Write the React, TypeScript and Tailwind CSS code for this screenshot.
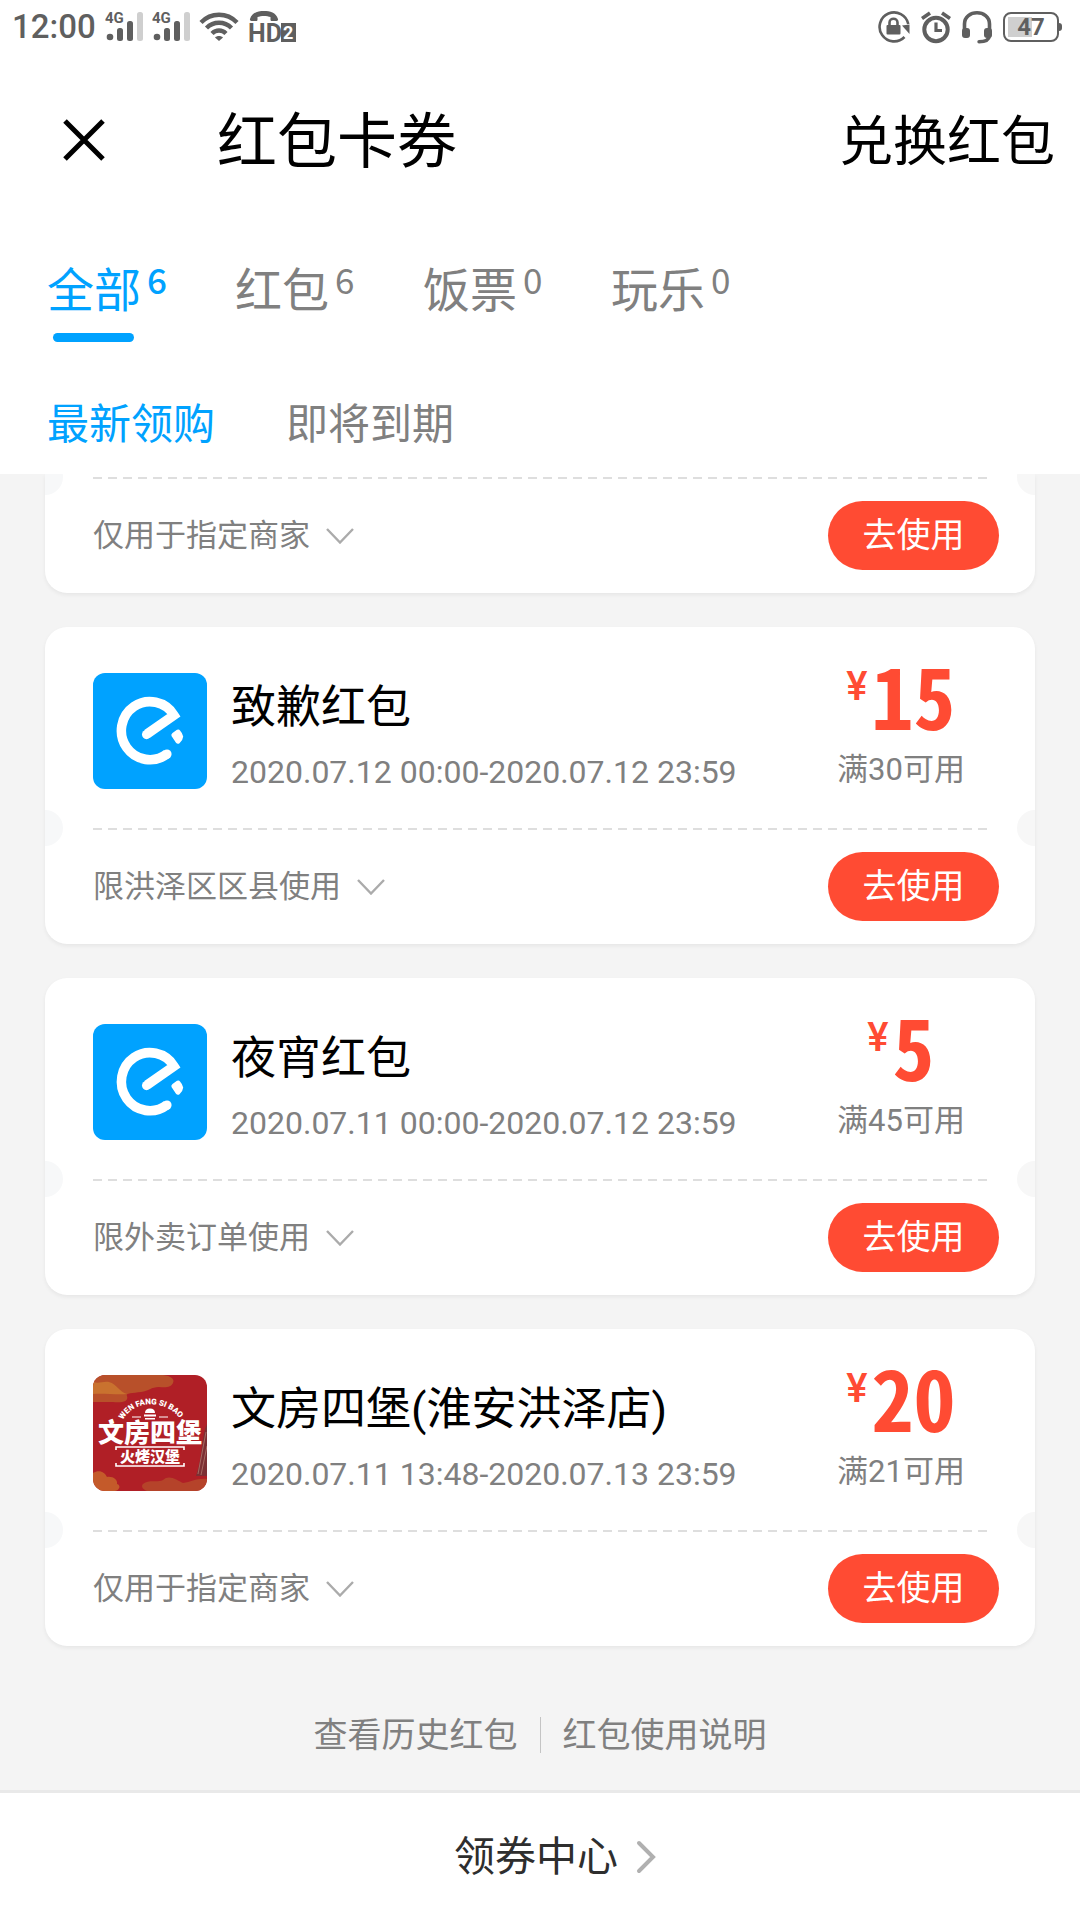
import React from "react";

type Coupon = {
  id: string;
  logo: "eleme" | "burger";
  title: string;
  period: string;
  amount: string;
  condition: string;
  limit: string;
};

const coupons: Coupon[] = [
  {
    id: "sorry",
    logo: "eleme",
    title: "致歉红包",
    period: "2020.07.12 00:00-2020.07.12 23:59",
    amount: "15",
    condition: "满30可用",
    limit: "限洪泽区区县使用",
  },
  {
    id: "night",
    logo: "eleme",
    title: "夜宵红包",
    period: "2020.07.11 00:00-2020.07.12 23:59",
    amount: "5",
    condition: "满45可用",
    limit: "限外卖订单使用",
  },
  {
    id: "wenfang",
    logo: "burger",
    title: "文房四堡(淮安洪泽店)",
    period: "2020.07.11 13:48-2020.07.13 23:59",
    amount: "20",
    condition: "满21可用",
    limit: "仅用于指定商家",
  },
];

const tabs = [
  { name: "全部", count: 6 },
  { name: "红包", count: 6 },
  { name: "饭票", count: 0 },
  { name: "玩乐", count: 0 },
];

function SignalIcon() {
  return (
    <svg width="38" height="40" viewBox="0 -5 38 40" aria-hidden="true">
      <text x="0" y="11" fontSize="15" fontWeight="700" fill="#5f5f5f" fontFamily="Roboto, sans-serif">
        4G
      </text>
      <circle cx="5" cy="25" r="3.3" fill="#5f5f5f" />
      <rect x="12" y="16" width="6" height="13" rx="2.5" fill="#5f5f5f" />
      <rect x="22" y="9" width="6" height="20" rx="2.5" fill="#5f5f5f" />
      <rect x="32" y="0" width="6" height="29" rx="2.5" fill="#cfcfcf" />
    </svg>
  );
}

function WifiIcon() {
  return (
    <svg width="40" height="30" viewBox="0 0 40 30" fill="none" stroke="#5f5f5f" strokeWidth="4.4" aria-hidden="true">
      <path d="M2 10.5C12 .2 28 .2 38 10.5" />
      <path d="M7.5 16C14.5 9 25.500 9 32.500 16" />
      <path d="M13 21.500C17 17.500 23 17.500 27 21.500" />
      <path d="M16 25.500C18 23.500 22 23.500 24 25.500L20 29Z" fill="#5f5f5f" stroke="none" />
    </svg>
  );
}

function HdIcon() {
  return (
    <svg width="48" height="40" viewBox="-1 -4 48 40" aria-hidden="true">
      <path
        d="M1 8C3 1.500 9 0 15 0S27 1.500 29 8C29.300 9.500 28.500 10 27.500 10H23C22 10 21.500 9.500 21.500 8.500V6C18 4.500 12 4.500 8.500 6V8.500C8.500 9.500 8 10 7 10H2.500C1.500 10 .7 9.500 1 8Z"
        fill="#5f5f5f"
      />
      <text x="-1" y="31" fontSize="25" fontWeight="700" fill="#5f5f5f" fontFamily="'Liberation Sans Narrow', Roboto, sans-serif">
        HD
      </text>
      <rect x="32" y="12" width="15" height="19" fill="#5f5f5f" />
      <text x="34" y="28" fontSize="18" fontWeight="700" fill="#fff" fontFamily="Roboto, sans-serif">
        2
      </text>
    </svg>
  );
}

function LockRotateIcon() {
  return (
    <svg width="34" height="34" viewBox="0 0 34 34" fill="none" stroke="#5f5f5f" strokeWidth="2.6" aria-hidden="true">
      <path d="M27.500 27A14.500 14.500 0 1 1 31.300 14" />
      <path d="M25 15.500L32.500 14.500V24Z" fill="#5f5f5f" stroke="none" />
      <rect x="9.500" y="15" width="14" height="9.500" rx="1" fill="#5f5f5f" stroke="none" />
      <path d="M12.500 16V12.500C12.500 7.500 20.500 7.500 20.500 12.500V16" />
    </svg>
  );
}

function AlarmIcon() {
  return (
    <svg width="30" height="34" viewBox="0 0 30 34" fill="none" stroke="#5f5f5f" aria-hidden="true">
      <circle cx="15" cy="19.500" r="11.700" strokeWidth="4" />
      <path d="M1 8.500L9 3M29 8.500L21 3" strokeWidth="3.600" />
      <path d="M15 12.500V20.500H21" strokeWidth="3.200" />
    </svg>
  );
}

function HeadsetIcon() {
  return (
    <svg width="32" height="34" viewBox="0 0 32 34" fill="none" stroke="#5f5f5f" aria-hidden="true">
      <path d="M3.500 20V14C3.500 -1 28.500 -1 28.500 14V20" strokeWidth="3.600" />
      <rect x="1" y="18" width="8" height="10" rx="3" fill="#5f5f5f" stroke="none" />
      <rect x="23" y="18" width="8" height="10" rx="3" fill="#5f5f5f" stroke="none" />
      <path d="M28.500 26C28 30 25 31.700 18 31.700" strokeWidth="3.400" strokeLinecap="round" />
    </svg>
  );
}

function Battery() {
  return (
    <div className="flex items-center" aria-label="电量47">
      <div className="flex h-[30px] w-[56px] items-center justify-center rounded-[8px] border-2 border-[#5f5f5f] bg-[linear-gradient(90deg,#cfcfcf_0_24px,transparent_24px)] bg-[position:3px_3px] bg-[length:48px_20px] bg-no-repeat text-[24px] leading-[26px] font-bold text-[#5f5f5f]">
        47
      </div>
      <div className="h-[8px] w-[3px] rounded-r bg-[#5f5f5f]" />
    </div>
  );
}

function ElemeLogo() {
  return (
    <svg className="size-full" viewBox="0 0 114 114" preserveAspectRatio="none" aria-hidden="true">
      <rect width="114" height="114" fill="#00a2ff" />
      <path d="M74 79.500A28.500 28.500 0 1 1 81 41.500L54 60" fill="none" stroke="#fff" strokeWidth="9.500" strokeLinejoin="miter" />
      <circle cx="74" cy="79.700" r="4.600" fill="#fff" />
      <circle cx="53.500" cy="60.500" r="4.500" fill="#fff" />
      <path d="M84 55.800Q86 54.800 87 56.500Q89.500 59 90.200 62.500Q90 66 86.500 69Q84.500 70.200 83 68.500L78.500 62Q77.800 60.200 79.500 59Z" fill="#fff" />
    </svg>
  );
}

function BurgerLogo() {
  return (
    <svg className="size-full bg-[#b01f26]" viewBox="0 0 114 114" aria-hidden="true">
      <defs>
        <path id="burger-arc" d="M30 44C41 23 74 23 88 44" />
      </defs>
      <path d="M0 -1H70C78 0 82 3 80 7S74 12 66 11C58 11 56 15 48 16C40 17 32 17 34 20C36 26 28 27 20 26L0 26Z" fill="#b8502a" />
      <path d="M0 6C6 8 10 5 16 6C24 8 26 16 34 18C24 19 10 17 0 18Z" fill="#c9722f" />
      <path d="M0 97C6 93 12 96 14 101C20 100 25 104 24 108C28 109 27 114 22 115H0Z" fill="#c45a2a" />
      <path d="M50 108C56 103 64 107 70 104C76 98 84 104 90 107C98 106 104 102 114 103V115H54C49 113 48 110 50 108Z" fill="#b5432a" />
      <path d="M114 48C108 60 110 80 103 100H114Z" fill="#7c3034" />
      <path d="M113 56L105 98M114 70L108 99" stroke="#a86a62" strokeWidth="1" />
      <text fontSize="8" fontWeight="900" fill="#fff" fontFamily="Roboto, sans-serif">
        <textPath href="#burger-arc">WEN FANG SI BAO</textPath>
      </text>
      <path d="M52 37Q52 32.500 57 32.500T62 37ZM51 38.500H63V40.500H51ZM52 42H62V43.500H52Z" fill="#fff" />
      <path d="M39 41H48M66 41H75" stroke="#fff" strokeWidth="1" />
      <text x="57" y="66" textAnchor="middle" fontSize="26" fontWeight="900" fill="#fff" fontFamily="'Noto Sans CJK SC', sans-serif">
        文房四堡
      </text>
      <path d="M23 74V71H91V74M23 87V90H91V87" fill="none" stroke="#fff" strokeWidth="1.600" />
      <text x="57" y="86" textAnchor="middle" fontSize="15" fontWeight="900" fill="#fff" fontFamily="'Noto Sans CJK SC', sans-serif">
        火烤汉堡
      </text>
    </svg>
  );
}

function CardFooter({ limit }: { limit: string }) {
  return (
    <>
      <div className="relative">
        <div className="absolute top-[-18px] -left-[18px] size-9 rounded-full bg-[#f7f8f9]" />
        <div className="absolute top-[-18px] -right-[18px] size-9 rounded-full bg-[#f7f7f7]" />
        <div className="mr-[42px] ml-12 h-[2px] bg-[repeating-linear-gradient(90deg,#dedede_0_9px,transparent_9px_15px)]" />
      </div>
      <div className="flex items-center justify-between pt-[22px] pr-9 pb-[23px] pl-12">
        <button type="button" className="flex items-center gap-4 text-[31px] leading-[44px] text-[#808080]">
          {limit}
          <svg width="28" height="16" viewBox="0 0 28 16" fill="none" stroke="#ababab" strokeWidth="2.400" aria-hidden="true">
            <path d="M1 1L14 14.500L27 1" />
          </svg>
        </button>
        <button type="button" className="h-[69px] w-[171px] rounded-full bg-[#ff4b33] text-[34px] leading-[69px] text-white">
          去使用
        </button>
      </div>
    </>
  );
}

function CouponCard({ coupon }: { coupon: Coupon }) {
  return (
    <article className="overflow-hidden rounded-[22px] bg-white shadow-[0_2px_4px_rgba(0,0,0,0.06)]">
      <div className="flex items-start pt-9 pr-9 pb-9 pl-12">
        <div className="mt-[10px] h-[116px] w-[114px] shrink-0 overflow-hidden rounded-[12px]">
          {coupon.logo === "eleme" ? <ElemeLogo /> : <BurgerLogo />}
        </div>
        <div className="mt-[17px] ml-6 min-w-0 flex-1">
          <h2 className="text-[45px] leading-[56px] text-black">{coupon.title}</h2>
          <p className="mt-4 text-[32px] leading-[40px] whitespace-nowrap text-[#808080]">{coupon.period}</p>
        </div>
        <div className="w-[196px] shrink-0 text-center">
          <p className="flex items-start justify-center gap-1 text-[#ff4b33]">
            <span className="mt-1 text-[40px] leading-[40px] font-medium">¥</span>
            <span className="font-['Noto_Sans_CJK_SC'] text-[84px] leading-[62px] font-bold [font-feature-settings:'hwid']">
              {coupon.amount}
            </span>
          </p>
          <p className="mt-[25px] text-[31px] leading-[40px] text-[#808080]">{coupon.condition}</p>
        </div>
      </div>
      <CardFooter limit={coupon.limit} />
    </article>
  );
}

export default function App() {
  return (
    <div className="flex min-h-screen flex-col bg-[#f4f4f4] font-[Roboto,'Noto_Sans_CJK_SC',sans-serif]">
      <header className="bg-white">
        <div className="flex h-14 items-center justify-between pr-[18px] pb-[2px] pl-3 text-[#5f5f5f]">
          <div className="flex items-center gap-[9px]">
            <span className="text-[33px] leading-[40px] font-medium">12:00</span>
            <SignalIcon />
            <SignalIcon />
            <WifiIcon />
            <HdIcon />
          </div>
          <div className="flex items-center gap-[10px]">
            <LockRotateIcon />
            <AlarmIcon />
            <HeadsetIcon />
            <Battery />
          </div>
        </div>

        <div className="flex h-[168px] items-center pr-[25px] pl-[63px] text-black">
          <button type="button" aria-label="关闭">
            <svg width="42" height="42" viewBox="0 0 42 42" stroke="currentColor" strokeWidth="5" aria-hidden="true">
              <path d="M2 2L40 40M40 2L2 40" />
            </svg>
          </button>
          <h1 className="ml-28 flex-1 pt-[6px] text-[60px] leading-[72px]">红包卡券</h1>
          <button type="button" className="pt-[6px] text-[54px] leading-[72px]">
            兑换红包
          </button>
        </div>

        <nav className="flex pt-[44px] pl-[47px]">
          {tabs.map((tab, i) => (
            <button
              key={tab.name}
              type="button"
              className={i === 0 ? "w-[188px] text-[#00a2ff]" : "w-[188px] text-[#808080]"}
            >
              <span className="flex items-start">
                <span className="text-[47px] leading-[46px]">{tab.name}</span>
                <span
                  className={
                    i === 0
                      ? "ml-[6px] font-['Noto_Sans_CJK_SC'] text-[35px] leading-[22px] font-medium"
                      : "ml-[6px] font-['Noto_Sans_CJK_SC'] text-[35px] leading-[22px]"
                  }
                >
                  {tab.count}
                </span>
              </span>
              <span
                className={
                  i === 0
                    ? "mt-[19px] ml-[6px] block h-[9px] w-[81px] rounded-full bg-[#00a2ff]"
                    : "mt-[19px] block h-[9px]"
                }
              />
            </button>
          ))}
        </nav>

        <div className="flex gap-[71px] pt-[58px] pb-6 pl-[47px] text-[42px] leading-[50px]">
          <button type="button" className="text-[#00a2ff]">
            最新领购
          </button>
          <button type="button" className="text-[#808080]">
            即将到期
          </button>
        </div>
      </header>

      <main className="flex-1 overflow-hidden">
        <div className="flex flex-col gap-[34px] px-[45px]">
          <article className="overflow-hidden rounded-b-[22px] bg-white pt-[3px] shadow-[0_2px_4px_rgba(0,0,0,0.06)]">
            <CardFooter limit="仅用于指定商家" />
          </article>
          {coupons.map((coupon) => (
            <CouponCard key={coupon.id} coupon={coupon} />
          ))}
        </div>
        <div className="flex items-center justify-center gap-[22px] pt-[68px] pb-[34px] text-[34px] leading-[42px] text-[#808080]">
          <a href="#history">查看历史红包</a>
          <span className="h-9 w-px bg-[#c4c4c4]" />
          <a href="#help">红包使用说明</a>
        </div>
      </main>

      <footer className="border-t-[3px] border-[#e9e9e9] bg-white">
        <a href="#center" className="flex h-[127px] items-center justify-center gap-[18px] pl-[30px] text-[41px] leading-[50px] text-[#2e2e2e]">
          领券中心
          <svg width="20" height="34" viewBox="0 0 20 34" fill="none" stroke="#b0b0b0" strokeWidth="4" strokeLinecap="round" aria-hidden="true">
            <path d="M3 3L17 17L3 31" />
          </svg>
        </a>
      </footer>
    </div>
  );
}
